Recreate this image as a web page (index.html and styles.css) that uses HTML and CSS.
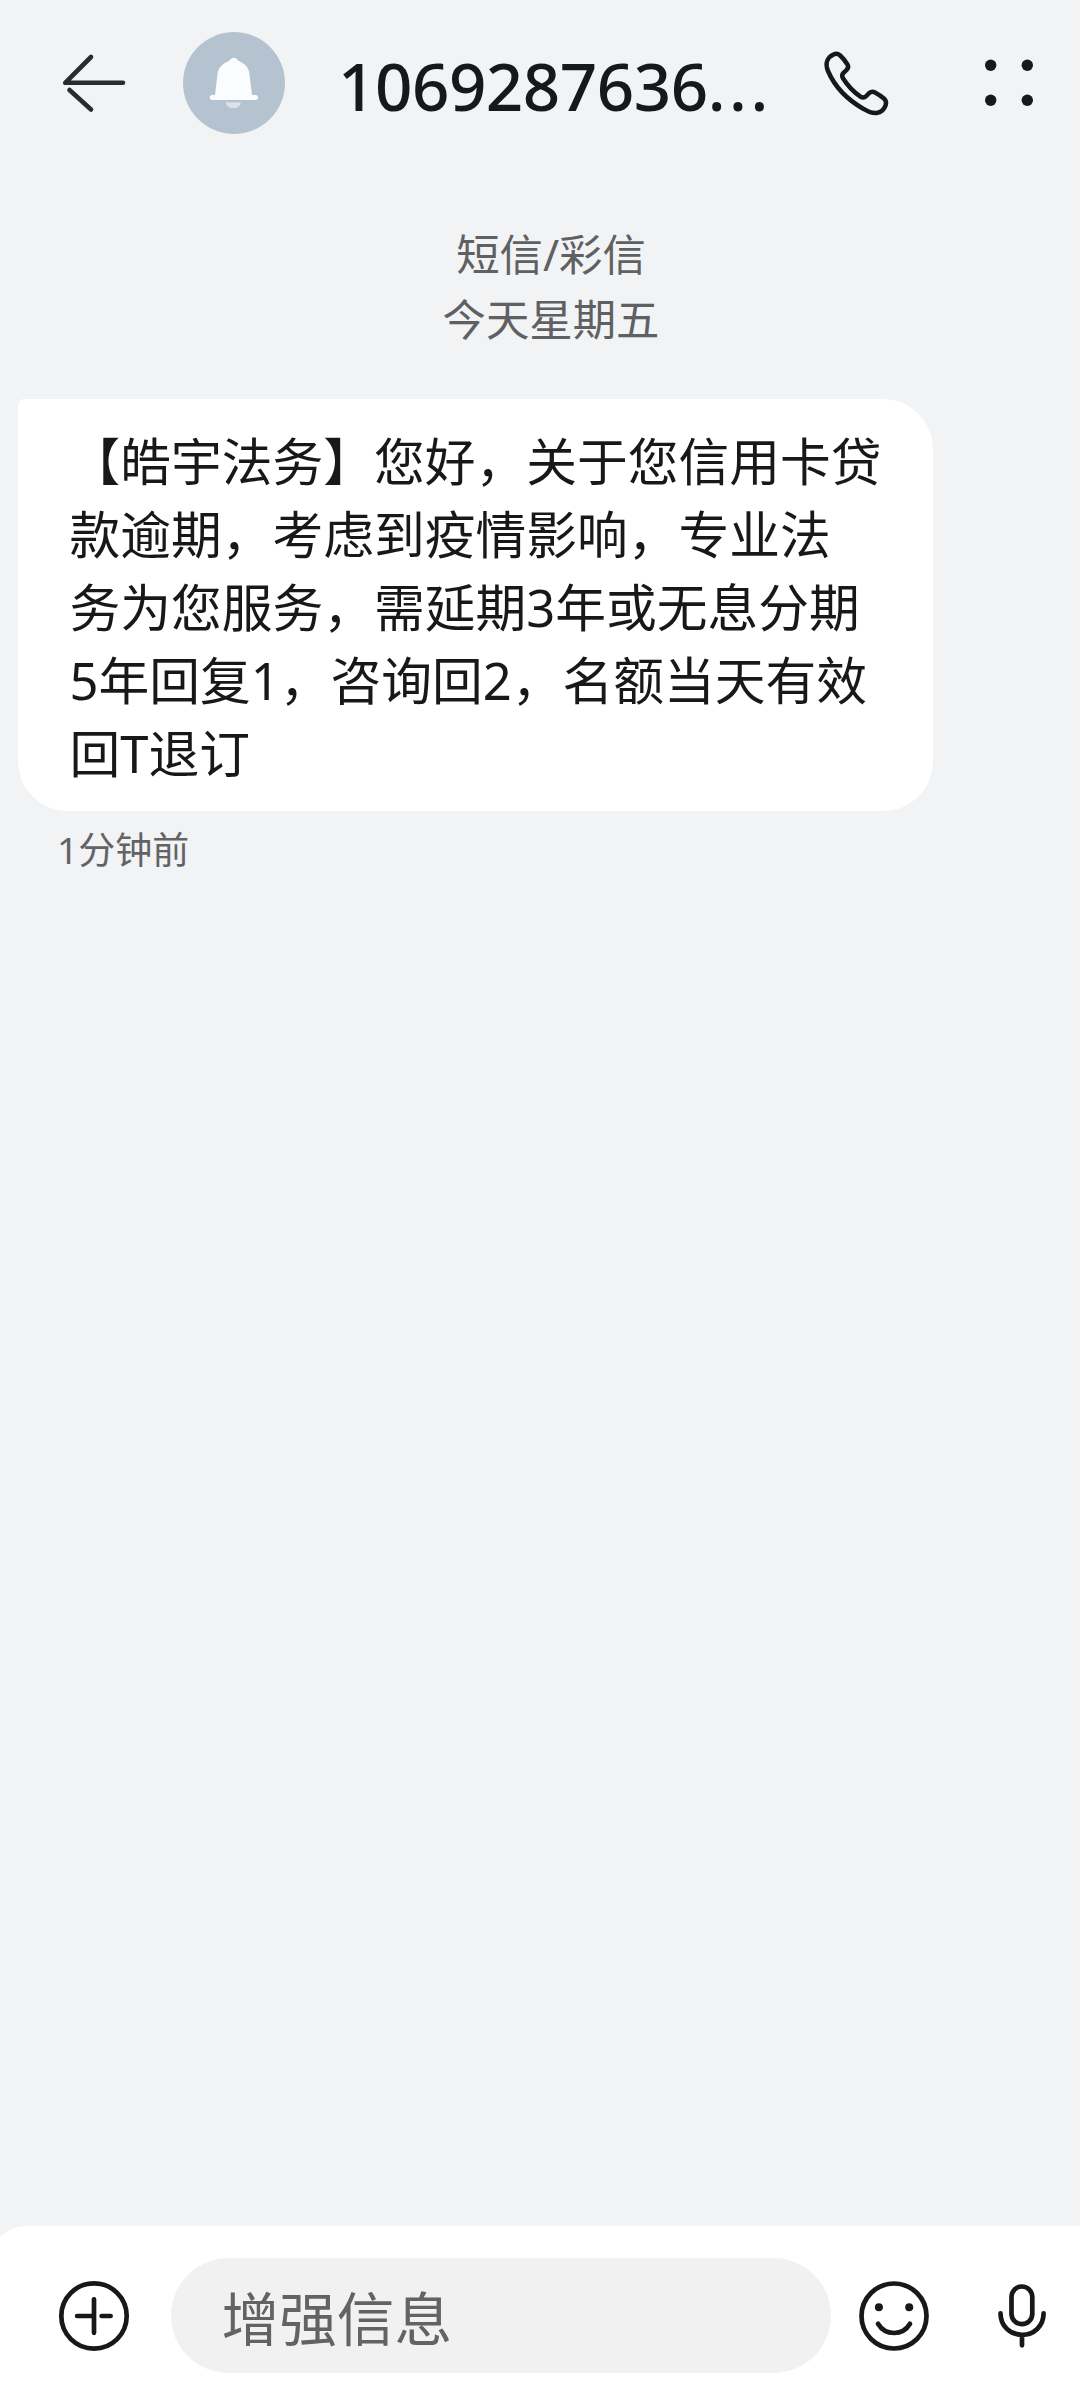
FILE: index.html
```html
<!DOCTYPE html>
<html lang="zh-CN">
<head>
<meta charset="utf-8">
<title>信息</title>
<link rel="stylesheet" href="styles.css">
</head>
<body>
<div class="screen">
  <header class="header">
    <svg class="back" width="68" height="66" viewBox="60 50 68 66">
      <path d="M91 57L65.200 82.800H123M69.500 90L91 109.500" />
    </svg>
    <svg class="avatar" width="102" height="102" viewBox="183 32 102 102">
      <circle cx="234" cy="83" r="51" fill="#b5c3d1"/>
      <path d="M225.500 102.200H241Q239.500 108.300 233.300 108.300T225.500 102.200Z" fill="#dbe2ec"/>
      <path d="M233.800 57.700C236 57.700 237.200 59 238.500 61C244 63 248.500 67 249.300 73L252 95H255.500A2.500 2.500 0 0 1 255.500 100H212.200A2.500 2.500 0 0 1 212.200 95H215L217.500 74C218.400 67 223.500 63 229 61C230.300 59 231.600 57.700 233.800 57.700Z" fill="#fafcff"/>
    </svg>
    <h1 class="title">1069287636<span class="dots">...</span></h1>
    <svg class="call" width="68" height="68" viewBox="822 49 68 68">
      <path d="M833.500 54.500Q837 52.600 840.200 55.500Q844.500 59.500 847.500 64.500Q849 67.300 846.700 69.800L843.500 72.800Q841.300 75 842.800 78Q850 89.500 860.500 96.700Q863.800 98.600 866.300 96L869.200 93Q871.800 90.800 875 92.400Q880 95 884.500 99Q886.800 101.500 885.700 105Q883.500 112 876.500 113Q871 113.500 864 109.200C846 99 834 85 828 71C824.500 62.500 828 57 833.500 54.500Z"/>
    </svg>
    <svg class="more" width="48" height="48" viewBox="985 58.500 48 48">
      <circle cx="990.700" cy="64.700" r="5.700"/><circle cx="1027.300" cy="64.700" r="5.700"/>
      <circle cx="990.700" cy="99.800" r="5.700"/><circle cx="1027.300" cy="99.800" r="5.700"/>
    </svg>
  </header>

  <main class="thread">
    <div class="day">
      <div>短信/彩信</div>
      <div>今天星期五</div>
    </div>
    <div class="bubble">
      <div>【皓宇法务】您好，关于您信用卡贷</div>
      <div>款逾期，考虑到疫情影响，专业法</div>
      <div>务为您服务，需延期3年或无息分期</div>
      <div>5年回复1，咨询回2，名额当天有效</div>
      <div>回T退订</div>
    </div>
    <div class="time">1分钟前</div>
  </main>

  <footer class="composer">
    <svg class="line-icon" width="72" height="72" viewBox="58.400 2279.700 72 72">
      <circle cx="94.400" cy="2315.700" r="32.700"/>
      <path d="M77.500 2315.700H94.400M102 2315.700H111M94.400 2299V2332.500"/>
    </svg>
    <div class="field">增强信息</div>
    <svg class="line-icon smile" width="72" height="72" viewBox="858.500 2279.700 72 72">
      <circle cx="894.500" cy="2315.700" r="32.500"/>
      <circle class="eye" cx="879.400" cy="2307" r="4"/><circle class="eye" cx="909.700" cy="2307" r="4"/>
      <path d="M878.500 2323.500Q884 2332.700 894.500 2332.700T910.500 2323.500"/>
    </svg>
    <svg class="line-icon mic" width="52" height="72" viewBox="995.700 2279.700 52 72">
      <rect x="1011.200" y="2286.200" width="20.800" height="37.600" rx="10.400"/>
      <path d="M1000.200 2313C1000.200 2326 1010 2334.500 1021.700 2334.500S1043.300 2326 1043.300 2313M1021.700 2334.500V2345"/>
    </svg>
  </footer>
</div>
</body>
</html>
```
FILE: styles.css
```css
* { box-sizing: border-box; }

body {
  margin: 0;
  background: #f2f3f5;
  color: #171819;
  font-family: "Noto Sans", "Noto Sans CJK SC", sans-serif;
}

.screen {
  width: 1080px;
  height: 2400px;
  display: flex;
  flex-direction: column;
  overflow: hidden;
}

.header {
  height: 166px;
  padding: 0 47px 0 60px;
  display: flex;
  align-items: center;
}

svg { flex: none; display: block; }

.back {
  fill: none;
  stroke: #292b2c;
  stroke-width: 4.600;
  stroke-linecap: round;
  stroke-linejoin: round;
}

.avatar { margin-left: 55px; }

.title {
  width: 442px;
  margin: 6px 0 0 53px;
  font-size: 65.500px;
  font-weight: 500;
  line-height: 90px;
  letter-spacing: -0.500px;
  white-space: nowrap;
}

.dots { letter-spacing: 3.600px; }

.call {
  margin-left: 42px;
  fill: none;
  stroke: #171819;
  stroke-width: 4.500;
  stroke-linejoin: round;
}

.more { margin-left: auto; fill: #171819; }

.thread { flex: 1; padding-top: 56px; }

.day {
  padding-left: 22px;
  text-align: center;
  font-size: 43.400px;
  line-height: 65px;
  color: #5f6061;
}

.bubble {
  width: 915px;
  height: 412px;
  margin: 47px 0 0 18px;
  padding: 26px 0 0 51.500px;
  border-radius: 6px 50px 50px 50px;
  background: #fff;
  font-size: 50.750px;
  line-height: 73px;
  white-space: nowrap;
}

.time {
  margin: 11px 0 0 57px;
  font-size: 37px;
  line-height: 56px;
  color: #626364;
}

.composer {
  height: 174px;
  margin-left: -10px;
  padding: 32px 32px 0 68.400px;
  display: flex;
  align-items: flex-start;
  border-top-left-radius: 36px;
  background: #fff;
}

.line-icon {
  margin-top: 21.700px;
  fill: none;
  stroke: #171819;
  stroke-width: 4.700;
  stroke-linecap: round;
  stroke-linejoin: round;
}

.eye { fill: #171819; stroke: none; }

.field {
  width: 660px;
  height: 115px;
  margin-left: 40.600px;
  padding-left: 50.500px;
  border-radius: 58px;
  background: #f1f1f1;
  color: #636363;
  font-size: 57.700px;
  line-height: 121px;
}

.smile { margin-left: 27.500px; }

.mic { margin-left: auto; }
```
